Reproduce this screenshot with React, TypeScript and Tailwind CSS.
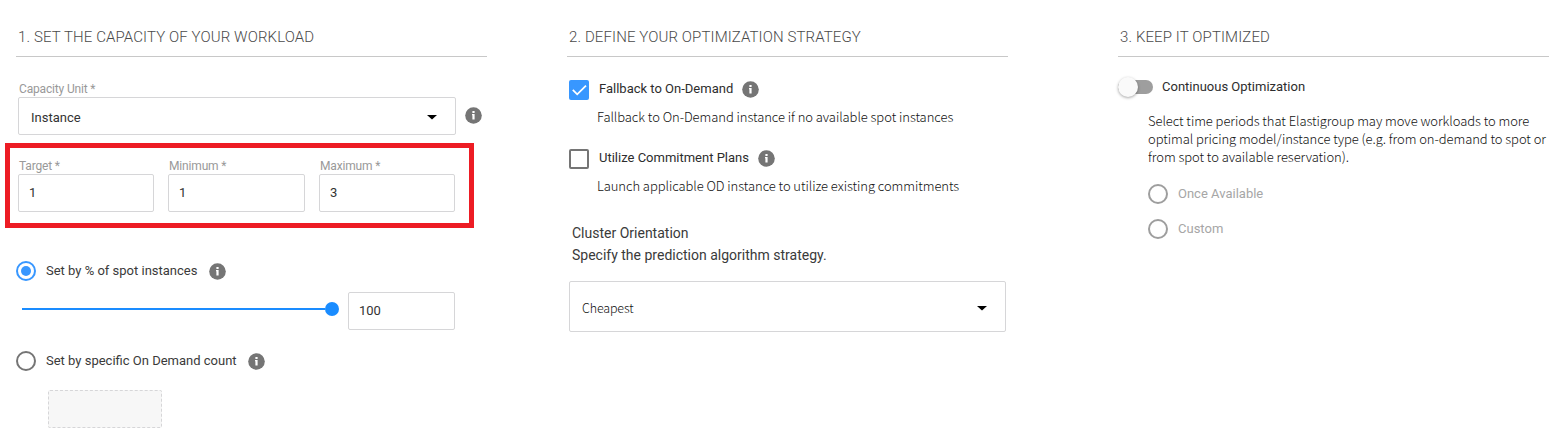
import type { ReactNode } from "react";

const SOURCE = "font-['Noto_Sans_CJK_SC',sans-serif] font-light";

function Heading({ children }: { children: ReactNode }) {
  return (
    <h2 className="h-[57px] border-b border-[#c8c8c8] pt-[27px] pl-[2px] text-[15px] leading-5 font-light tracking-[0.11px] whitespace-nowrap text-[#4a4a4a]">
      {children}
    </h2>
  );
}

function Info() {
  return (
    <svg className="size-[17px] shrink-0" viewBox="0 0 17 17">
      <circle cx="8.5" cy="8.5" r="8.3" fill="#757575" />
      <path d="M7.4 4h2.2v2H7.4zM7 7h2.6v5.6H7.4V8.2H7z" fill="#fff" />
    </svg>
  );
}

function Caret() {
  return (
    <svg className="h-[5px] w-[10px]" viewBox="0 0 10 5">
      <path d="M0 0h10L5 4.6z" fill="#000" />
    </svg>
  );
}

function Radio({ tone }: { tone: "on" | "off" | "disabled" }) {
  const color = tone === "on" ? "#3897ff" : tone === "off" ? "#757575" : "#9e9e9e";
  return (
    <svg className="size-5 shrink-0" viewBox="0 0 20 20">
      <circle cx="10" cy="10" r="9" fill="none" stroke={color} strokeWidth="2" />
      {tone === "on" && <circle cx="10" cy="10" r="5" fill={color} />}
    </svg>
  );
}

function Field({ label, value, width }: { label: string; value: string; width: string }) {
  return (
    <div className={width}>
      <div className="h-4 pl-px text-[12px] leading-4 tracking-[-0.16px] text-[#999]">{label}</div>
      <div className="flex h-[38px] items-center rounded-[2px] border border-[#d6d6d8] pl-[10px] text-[13px] text-[#333]">
        {value}
      </div>
    </div>
  );
}

function Capacity() {
  return (
    <section className="ml-4 w-[471px]">
      <Heading>1. SET THE CAPACITY OF YOUR WORKLOAD</Heading>
      <div className="mt-6 pl-[3px] text-[12px] leading-4 tracking-[-0.16px] text-[#999]">Capacity Unit *</div>
      <div className="ml-[2px] flex items-center gap-[9px]">
        <div className="flex h-[38px] w-[438px] items-center justify-between rounded-[2px] border border-[#d6d6d8] pt-[3px] pr-[18px] pl-3 text-[13px] text-[#333]">
          <span>Instance</span>
          <Caret />
        </div>
        <div className="-mt-[2px]">
          <Info />
        </div>
      </div>
      <div className="mt-2 -ml-[11px] flex h-[85px] w-[469px] gap-[14px] border-[5px] border-[#ed1c24] pt-[10px] pl-2">
        <Field label="Target *" value="1" width="w-[136px]" />
        <Field label="Minimum *" value="1" width="w-[137px]" />
        <Field label="Maximum *" value="3" width="w-[136px]" />
      </div>
      <div className="mt-[33px] flex h-5 items-center">
        <Radio tone="on" />
        <span className="ml-[10px] text-[13px] text-[#3a3a3a]">Set by % of spot instances</span>
        <span className="ml-[12px]"><Info /></span>
      </div>
      <div className="mt-[11px] flex h-[38px] pl-[6px]">
        <div className="mt-[10px] flex h-[14px] w-[317px] items-center">
          <div className="h-[2px] w-[303px] bg-[#1a8cff]" />
          <div className="size-[14px] rounded-full bg-[#1a8cff]" />
        </div>
        <div className="ml-[9px] flex w-[107px] items-center rounded-[2px] border border-[#d6d6d8] pl-[10px] text-[13px] text-[#333]">
          100
        </div>
      </div>
      <div className="mt-[21px] flex h-5 items-center">
        <Radio tone="off" />
        <span className="ml-[10px] text-[13px] text-[#3a3a3a]">Set by specific On Demand count</span>
        <span className="ml-[11px]"><Info /></span>
      </div>
      <div className="mt-[19px] ml-8 h-[38px] w-[114px] rounded-[2px] border border-dashed border-[#d6d6d8] bg-[#f7f7f7]" />
    </section>
  );
}

function Option({ checked, label, note }: { checked: boolean; label: string; note: string }) {
  return (
    <div className="h-[69px] pl-[2px]">
      <div className="flex h-5">
        {checked ? (
          <svg className="size-5 shrink-0" viewBox="0 0 20 20">
            <rect width="20" height="20" rx="2" fill="#3897ff" />
            <path d="M3.8 9.9l4.4 4.4L17 5.7" fill="none" stroke="#fff" strokeWidth="1.8" />
          </svg>
        ) : (
          <div className="size-5 shrink-0 rounded-[2px] border-2 border-[#757575]" />
        )}
        <span className="ml-[10px] text-[13px] leading-[18px] text-[#2d2d2d]">{label}</span>
        <span className="ml-[9px] pt-px"><Info /></span>
      </div>
      <div className={`${SOURCE} mt-[7px] pl-7 text-[13px] leading-5 tracking-[-0.06px] whitespace-nowrap text-[#111]`}>{note}</div>
    </div>
  );
}

function Strategy() {
  return (
    <section className="ml-20 w-[441px]">
      <Heading>2. DEFINE YOUR OPTIMIZATION STRATEGY</Heading>
      <div className="mt-[23px]">
        <Option checked label="Fallback to On-Demand" note="Fallback to On-Demand instance if no available spot instances" />
        <Option checked={false} label="Utilize Commitment Plans" note="Launch applicable OD instance to utilize existing commitments" />
      </div>
      <div className="mt-[4px] pl-[5px] text-[14px] leading-[22px] text-[#3a3a3a]">
        <div>Cluster Orientation</div>
        <div>Specify the prediction algorithm strategy.</div>
      </div>
      <div className="mt-[15px] ml-[2px] flex h-[51px] w-[437px] items-center justify-between rounded-[2px] border border-[#d6d6d8] pt-[3px] pr-[18px] pl-3">
        <span className={`${SOURCE} text-[12.5px] leading-4 tracking-[-0.15px] text-[#111]`}>Cheapest</span>
        <Caret />
      </div>
    </section>
  );
}

function Optimized() {
  return (
    <section className="ml-[110px] w-[431px]">
      <Heading>3. KEEP IT OPTIMIZED</Heading>
      <div className="mt-5 flex h-5 items-center">
        <div className="flex h-[14px] w-[35px] items-center rounded-full bg-[#9e9e9e]">
          <div className="size-5 shrink-0 rounded-full bg-[#fafafa] shadow-[0_1px_3px_rgba(0,0,0,0.35)]" />
        </div>
        <span className="ml-[9px] text-[13px] text-[#2d2d2d]">Continuous Optimization</span>
      </div>
      <p className={`${SOURCE} mt-[15px] ml-[30px] text-[13px] leading-[18px] tracking-[-0.06px] whitespace-nowrap text-[#111]`}>
        Select time periods that Elastigroup may move workloads to more
        <br />
        optimal pricing model/instance type (e.g. from on-demand to spot or
        <br />
        from spot to available reservation).
      </p>
      <div className="mt-[18px] ml-[30px] flex flex-col gap-[15px] text-[13px] text-[#a6a6a6]">
        <div className="flex h-5 items-center gap-[10px]">
          <Radio tone="disabled" />
          <span>Once Available</span>
        </div>
        <div className="flex h-5 items-center gap-[10px]">
          <Radio tone="disabled" />
          <span>Custom</span>
        </div>
      </div>
    </section>
  );
}

export default function App() {
  return (
    <main className="flex h-[440px] w-[1549px] overflow-hidden bg-white font-[Roboto,sans-serif]">
      <Capacity />
      <Strategy />
      <Optimized />
    </main>
  );
}
